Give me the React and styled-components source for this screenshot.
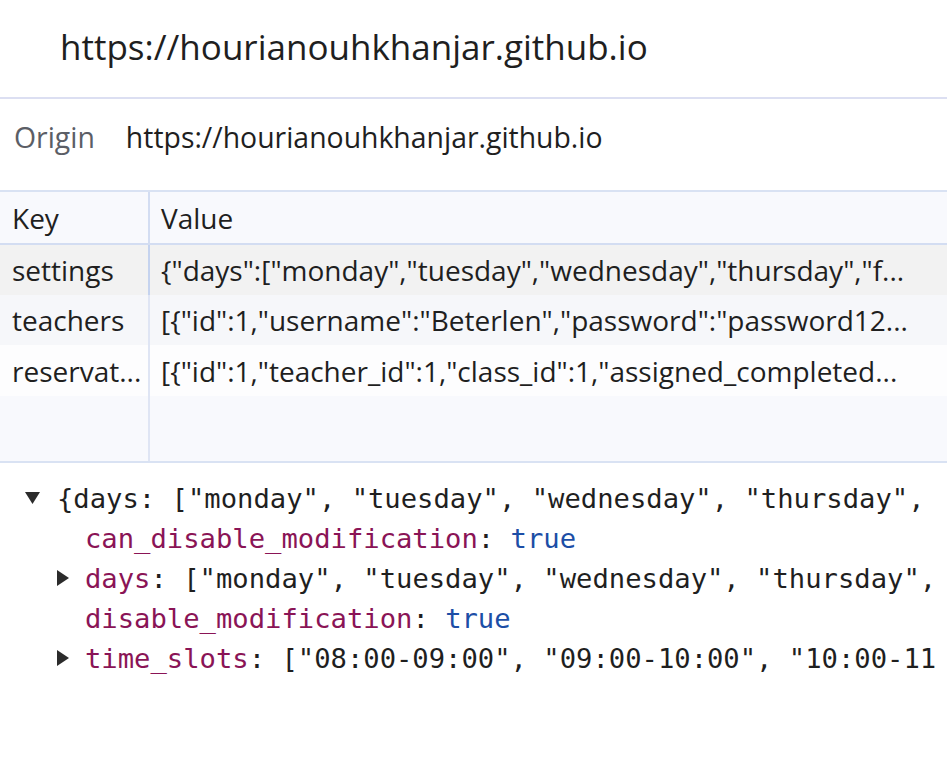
import React from "react";
import styled, { createGlobalStyle } from "styled-components";

const GlobalStyle = createGlobalStyle`
  html, body {
    margin: 0;
    padding: 0;
    background: #ffffff;
    overflow: hidden;
  }
  body {
    width: 947px;
    height: 775px;
    font-family: "Open Sans", "Noto Sans", sans-serif;
    color: #1f1f1f;
  }
`;

const rows = [
  {
    key: "settings",
    value: '{"days":["monday","tuesday","wednesday","thursday","f...',
    selected: true,
  },
  {
    key: "teachers",
    value: '[{"id":1,"username":"Beterlen","password":"password12...',
    shade: true,
  },
  {
    key: "reservat...",
    value: '[{"id":1,"teacher_id":1,"class_id":1,"assigned_completed...',
  },
];

const Arrow = ({ open }) =>
  open ? (
    <ArrowIcon viewBox="0 0 15 12" width="15" height="12" gap={17}>
      <path d="M0 0h15L7.5 12z" />
    </ArrowIcon>
  ) : (
    <ArrowIcon viewBox="0 0 12 16" width="12" height="16" gap={16}>
      <path d="M0 0v16l12-8z" />
    </ArrowIcon>
  );

const App = () => {
  return (
    <>
      <GlobalStyle />
      <Page>
        <TitleBar>https://hourianouhkhanjar.github.io</TitleBar>
        <OriginRow>
          <OriginLabel>Origin</OriginLabel>
          <OriginValue>https://hourianouhkhanjar.github.io</OriginValue>
        </OriginRow>

        <Table>
          <HeadCell first>Key</HeadCell>
          <HeadCell>Value</HeadCell>
          {rows.map((row, index) => (
            <React.Fragment key={index}>
              <Cell first selected={row.selected} shade={row.shade}>
                {row.key}
              </Cell>
              <Cell selected={row.selected} shade={row.shade}>
                {row.value}
              </Cell>
            </React.Fragment>
          ))}
          <Filler first />
          <Filler />
        </Table>

        {/* console preview of the selected value */}
        <Console>
          <Line indent={25}>
            <Arrow open />
            <Plain>{'{days: ["monday", "tuesday", "wednesday", "thursday",'}</Plain>
          </Line>
          <Line indent={85}>
            <Prop>can_disable_modification</Prop>
            <Plain>: </Plain>
            <Bool>true</Bool>
          </Line>
          <Line indent={57}>
            <Arrow />
            <Prop>days</Prop>
            <Plain>{': ["monday", "tuesday", "wednesday", "thursday",'}</Plain>
          </Line>
          <Line indent={85}>
            <Prop>disable_modification</Prop>
            <Plain>: </Plain>
            <Bool>true</Bool>
          </Line>
          <Line indent={57}>
            <Arrow />
            <Prop>time_slots</Prop>
            <Plain>{': ["08:00-09:00", "09:00-10:00", "10:00-11'}</Plain>
          </Line>
        </Console>
      </Page>
    </>
  );
};

const Page = styled.div`
  width: 947px;
  display: flex;
  flex-direction: column;
`;

const TitleBar = styled.div`
  height: 99px;
  padding-left: 60px;
  padding-bottom: 4px;
  display: flex;
  align-items: center;
  font-size: 35px;
  color: #1f1f1f;
  border-bottom: 2px solid #dcdff2;
  box-sizing: border-box;
`;

const OriginRow = styled.div`
  height: 74px;
  margin-top: 1px;
  margin-bottom: 16px;
  padding-left: 14px;
  display: flex;
  align-items: center;
  gap: 31px;
  font-size: 28.4px;
`;

const OriginLabel = styled.span`
  color: #5b5e66;
`;

const OriginValue = styled.span`
  color: #1f1f1f;
`;

const Table = styled.div`
  display: grid;
  grid-template-columns: 150px 1fr;
  grid-template-rows: 53px 50px 50px 51px 65px;
  border-top: 2px solid #d9e2f3;
  border-bottom: 2px solid #d9e2f3;
  background: #f8f9fd;
  font-size: 28px;
`;

const HeadCell = styled.div`
  display: flex;
  align-items: center;
  padding-left: ${p => (p.first ? "12px" : "11px")};
  border-right: ${p => (p.first ? "2px solid #d3ddf2" : "none")};
  border-bottom: 2px solid #d3ddf2;
  background: #f8f9fd;
  color: #1f1f1f;
`;

const Cell = styled.div`
  display: flex;
  align-items: center;
  padding-left: ${p => (p.first ? "12px" : "11px")};
  border-right: ${p => (p.first ? (p.selected ? "2px solid #c5d3ef" : "2px solid #dfe5f4") : "none")};
  background: ${p => (p.selected ? "#f2f2f2" : p.shade ? "#f6f7fa" : "#fdfdfe")};
  white-space: nowrap;
  overflow: hidden;
  color: #1f1f1f;
`;

const Filler = styled.div`
  border-right: ${p => (p.first ? "2px solid #dfe5f4" : "none")};
  background: #f8f9fd;
`;

const Console = styled.div`
  padding-top: 15px;
  display: flex;
  flex-direction: column;
  font-family: "DejaVu Sans Mono", "Liberation Mono", monospace;
  font-size: 27.2px;
  color: #1f1f1f;
`;

const Line = styled.div`
  height: 40px;
  display: flex;
  align-items: center;
  padding-left: ${p => p.indent}px;
  white-space: pre;
  overflow: hidden;
`;

const ArrowIcon = styled.svg`
  flex-shrink: 0;
  margin-right: ${p => p.gap}px;
  fill: #2b2b2b;
`;

const Plain = styled.span`
  color: #1f1f1f;
`;

const Prop = styled.span`
  color: #8a1456;
`;

const Bool = styled.span`
  color: #1c4ea6;
`;

export default App;
